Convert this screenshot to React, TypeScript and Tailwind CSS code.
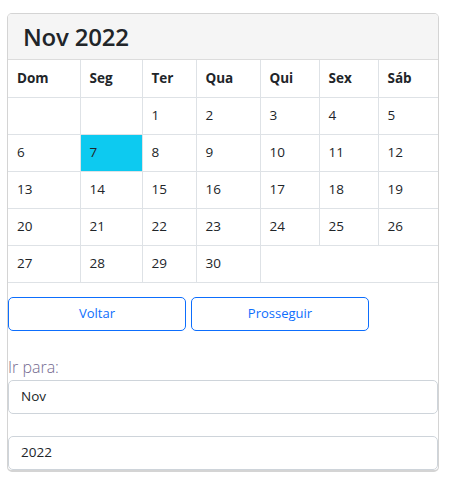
const weekDays = ["Dom", "Seg", "Ter", "Qua", "Qui", "Sex", "Sáb"];

const weeks: (number | null)[][] = [
    [null, null, 1, 2, 3, 4, 5],
    [6, 7, 8, 9, 10, 11, 12],
    [13, 14, 15, 16, 17, 18, 19],
    [20, 21, 22, 23, 24, 25, 26],
    [27, 28, 29, 30],
];

const colWidths = ["w-[72px]", "w-[62px]", "w-[54px]", "w-[64px]", "w-[59px]", "w-[59px]", "w-auto"];
const selectedDay = 7;

export default function App() {
    return (
        <div className="w-[451px] h-[483px] bg-white pt-[13px] pl-[7px] font-['Open_Sans',sans-serif] text-[#212529]">
            {/* card */}
            <div className="w-[432px] h-[459px] rounded-[5px] border border-[#d4d4d4] border-b-2 overflow-hidden">
                {/* header */}
                <div className="h-[46px] bg-[#f5f5f5] border-b border-[#dcdcdc] pl-[15px] flex items-center">
                    <div className="text-[24px] leading-none font-semibold tracking-[-0.2px]">Nov 2022</div>
                </div>

                {/* month grid */}
                <table className="w-[430px] border-collapse text-[13.5px] table-fixed">
                    <thead>
                        <tr className="h-[37px]">
                            {weekDays.map((d, i) => (
                                <th key={d} className={`${colWidths[i]} border border-[#dee2e6] text-left pl-[9px] font-bold border-l-0 ${i === 6 ? "border-r-0" : ""} border-t-0`}>
                                    {d}
                                </th>
                            ))}
                        </tr>
                    </thead>
                    <tbody>
                        {weeks.map((week, w) => (
                            <tr key={w} className="h-[37px]">
                                {week.map((day, i) => (
                                    <td
                                        key={i}
                                        className={`border border-[#dee2e6] border-l-0 pl-[9px] ${i === 6 ? "border-r-0" : ""} ${day === selectedDay ? "bg-[#0dcaf0]" : ""}`}>
                                        {day ?? ""}
                                    </td>
                                ))}
                                {week.length < 7 && (
                                    <td colSpan={7 - week.length} className="border border-[#dee2e6] border-l-0 border-r-0"></td>
                                )}
                            </tr>
                        ))}
                    </tbody>
                </table>

                {/* navigation */}
                <div className="flex gap-[5px] mt-[14px]">
                    <button className="w-[178px] h-[34px] rounded-[5px] border border-[#0d6efd] text-[#0d6efd] text-[13px]">Voltar</button>
                    <button className="w-[178px] h-[34px] rounded-[5px] border border-[#0d6efd] text-[#0d6efd] text-[13px]">Prosseguir</button>
                </div>

                {/* jump to */}
                <div className="mt-[26px] text-[16px] font-light leading-[20px] text-[#746a8f]">Ir para:</div>
                <div className="mt-[3px] h-[34px] w-[430px] rounded-[5px] border border-[#ced4da] flex items-center pl-[12px] text-[13.5px]">Nov</div>
                <div className="mt-[22px] h-[34px] w-[430px] rounded-[5px] border border-[#ced4da] flex items-center pl-[12px] text-[13.5px]">2022</div>
            </div>
        </div>
    );
}
